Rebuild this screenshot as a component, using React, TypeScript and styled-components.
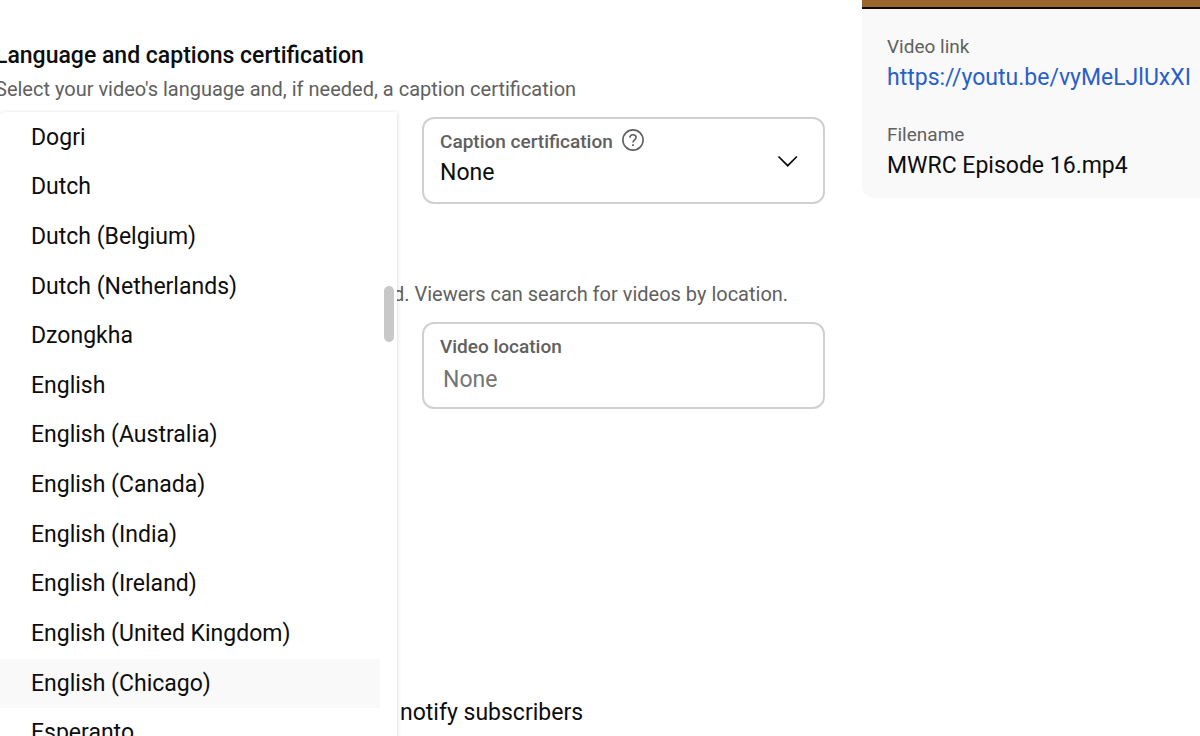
import React from 'react';
import styled, { createGlobalStyle } from 'styled-components';

const GlobalStyle = createGlobalStyle`
  *, *::before, *::after { box-sizing: border-box; }
  body { margin: 0; background: #fff; }
  body, button, input { font-family: Roboto, "Liberation Sans", sans-serif; color: #0d0d0d; }
  h2, p, ul, dl, dd { margin: 0; padding: 0; }
`;

const Page = styled.div`
  display: flex;
  align-items: flex-start;
  height: 100vh;
  overflow: hidden;
`;

const Main = styled.main`
  position: relative;
  flex: 1;
  min-width: 0;
  margin-left: -5px;
  padding: 40px 37px 0 0;
`;

const Title = styled.h2`
  font-size: 23px;
  line-height: 32px;
  font-weight: 500;
  white-space: nowrap;
`;

const Hint = styled.p<{ $inset?: boolean }>`
  font-size: 20px;
  line-height: 28px;
  color: #606060;
  white-space: nowrap;
  padding-left: ${(p) => (p.$inset ? '398px' : '0')};
`;

const Section = styled.section`
  display: flex;
  flex-direction: column;
  gap: 14px;
`;

const LocationSection = styled(Section)`
  margin-top: 76px;
`;

const TitleBlock = styled.div`
  display: flex;
  flex-direction: column;
  gap: 3px;
`;

const Columns = styled.div`
  padding-left: 427px;
`;

const fieldBox = `
  width: 100%;
  height: 87px;
  border: 2px solid #d0d0d0;
  border-radius: 12px;
  background: #fff;
  padding: 6px 16px;
`;

const SelectField = styled.button`
  ${fieldBox}
  display: flex;
  align-items: flex-start;
  justify-content: space-between;
  text-align: left;
  padding-right: 24px;
`;

const TextField = styled.label`
  ${fieldBox}
  display: flex;
  flex-direction: column;
`;

const FieldText = styled.span`
  display: flex;
  flex-direction: column;
`;

const FieldLabel = styled.span`
  display: flex;
  align-items: center;
  gap: 8px;
  height: 32px;
  font-size: 19px;
  font-weight: 500;
  color: #606060;
`;

const FieldValue = styled.span`
  font-size: 23px;
  line-height: 32px;
`;

const FieldInput = styled.input`
  width: 100%;
  height: 34px;
  border: 0;
  outline: 0;
  padding: 0 3px;
  background: transparent;
  font-size: 23px;
  &::placeholder { color: #757575; opacity: 1; }
`;

const Notify = styled.p`
  margin-top: 288px;
  padding-left: 405px;
  font-size: 23px;
  line-height: 32px;
  white-space: nowrap;
`;

const Menu = styled.div`
  position: absolute;
  z-index: 2;
  top: 112px;
  left: 0;
  width: 402px;
  background: #fff;
  border-radius: 12px 0 0 0;
  box-shadow: 0 1px 4px rgba(0, 0, 0, 0.18);
`;

const OptionList = styled.ul`
  display: grid;
  grid-auto-rows: 1fr;
  height: 645px;
  margin: 1px 17px 0 0;
  list-style: none;
`;

const Option = styled.li<{ $active?: boolean }>`
  display: flex;
  align-items: center;
  padding-left: 36px;
  font-size: 23px;
  line-height: 32px;
  cursor: pointer;
  background: ${(p) => (p.$active ? '#f9f9f9' : 'transparent')};
`;

const ScrollThumb = styled.div`
  position: absolute;
  top: 174px;
  right: 3px;
  width: 10px;
  height: 56px;
  border-radius: 5px;
  background: #c8c8c8;
`;

const Sidebar = styled.aside`
  width: 338px;
  flex: none;
  background: #f9f9f9;
  border-radius: 0 0 0 12px;
`;

const VideoEdge = styled.div`
  height: 9px;
  background: #9a672f;
  border-bottom: 2px solid #120b05;
`;

const Details = styled.dl`
  display: flex;
  flex-direction: column;
  gap: 26px;
  padding: 24px 0 15px 25px;
`;

const Term = styled.dt`
  font-size: 19px;
  line-height: 28px;
  color: #606060;
`;

const Value = styled.dd`
  font-size: 23px;
  line-height: 34px;
  white-space: nowrap;
`;

const Link = styled.a`
  color: #2860c8;
  text-decoration: none;
`;

const Chevron = styled.svg`
  align-self: center;
`;

const languages = [
  'Dogri', 'Dutch', 'Dutch (Belgium)', 'Dutch (Netherlands)', 'Dzongkha', 'English',
  'English (Australia)', 'English (Canada)', 'English (India)', 'English (Ireland)',
  'English (United Kingdom)', 'English (Chicago)', 'Esperanto',
];

const HelpIcon = () => (
  <svg width="24" height="24" viewBox="0 0 24 24" fill="none" stroke="#606060" strokeWidth="1.6" aria-hidden="true">
    <circle cx="12" cy="11" r="10.1" />
    <path d="M8.9 8.7C8.9 6.8 10.2 5.7 12 5.7s3.1 1.1 3.1 2.8c0 2.4-3.1 2.5-3.1 5.1" />
    <path d="M12 15.2v1.8" strokeWidth="1.8" />
  </svg>
);

const ChevronIcon = () => (
  <Chevron width="22" height="14" viewBox="0 0 22 14" fill="none" stroke="#0d0d0d" strokeWidth="1.7" aria-hidden="true">
    <path d="M1.5 2.5l9.200 9.200L19.900 2.500" />
  </Chevron>
);

export default function App() {
  return (
    <>
      <GlobalStyle />
      <Page>
        <Main>
          <Section>
            <TitleBlock>
              <Title>Language and captions certification</Title>
              <Hint>Select your video's language and, if needed, a caption certification</Hint>
            </TitleBlock>
            <Columns>
              <SelectField type="button" aria-haspopup="listbox">
                <FieldText>
                  <FieldLabel>Caption certification <HelpIcon /></FieldLabel>
                  <FieldValue>None</FieldValue>
                </FieldText>
                <ChevronIcon />
              </SelectField>
            </Columns>
          </Section>
          <LocationSection>
            <Hint $inset>d. Viewers can search for videos by location.</Hint>
            <Columns>
              <TextField>
                <FieldLabel>Video location</FieldLabel>
                <FieldInput type="text" placeholder="None" />
              </TextField>
            </Columns>
          </LocationSection>
          <Notify>notify subscribers</Notify>
          <Menu>
            <OptionList role="listbox" aria-label="Video language">
              {languages.map((name) => {
                const active = name === 'English (Chicago)';
                return (
                  <Option key={name} role="option" aria-selected={active} $active={active}>
                    {name}
                  </Option>
                );
              })}
            </OptionList>
            <ScrollThumb />
          </Menu>
        </Main>
        <Sidebar>
          <VideoEdge />
          <Details>
            <div>
              <Term>Video link</Term>
              <Value><Link href="https://youtu.be/vyMeLJlUxXI">https://youtu.be/vyMeLJlUxXI</Link></Value>
            </div>
            <div>
              <Term>Filename</Term>
              <Value>MWRC Episode 16.mp4</Value>
            </div>
          </Details>
        </Sidebar>
      </Page>
    </>
  );
}
